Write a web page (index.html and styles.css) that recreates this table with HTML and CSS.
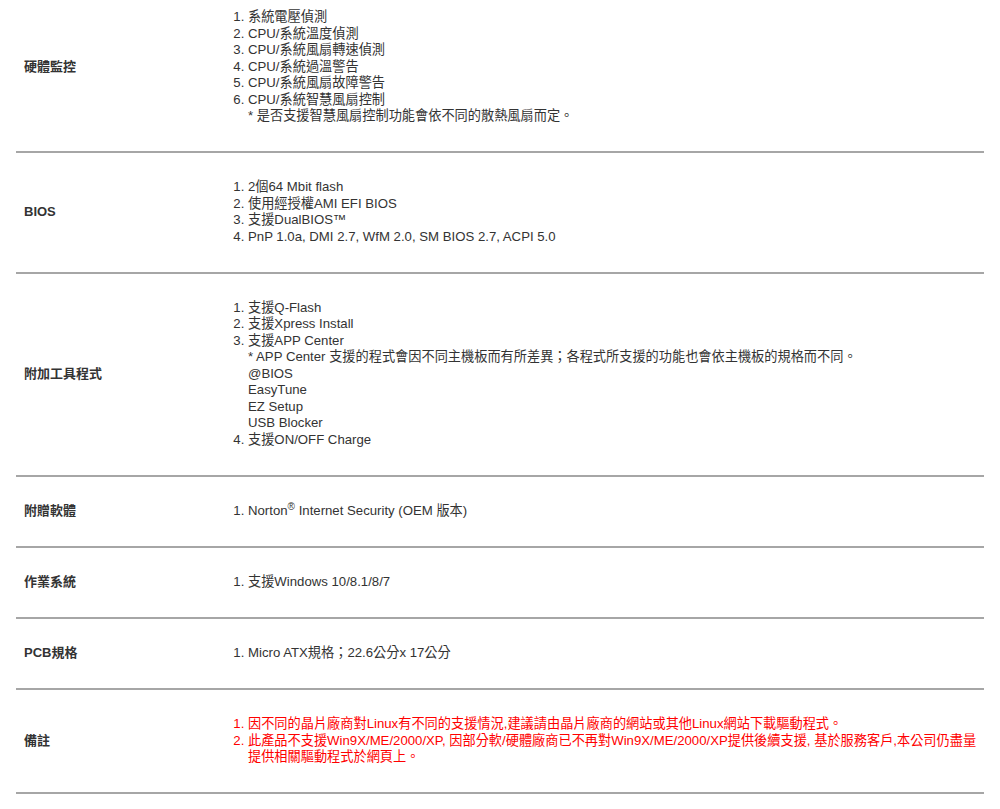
FILE: index.html
```html
<!DOCTYPE html>
<html lang="zh-Hant">
<head>
    <meta charset="UTF-8">
    <title>規格</title>
    <link rel="stylesheet" href="styles.css">
</head>
<body>
    <div class="specs">
        <div class="spec-row">
            <div class="spec-label">硬體監控</div>
            <ol class="spec-list">
                <li>系統電壓偵測</li>
                <li>CPU/系統溫度偵測</li>
                <li>CPU/系統風扇轉速偵測</li>
                <li>CPU/系統過溫警告</li>
                <li>CPU/系統風扇故障警告</li>
                <li>CPU/系統智慧風扇控制
                    <div>* 是否支援智慧風扇控制功能會依不同的散熱風扇而定。</div>
                </li>
            </ol>
        </div>

        <div class="spec-row">
            <div class="spec-label">BIOS</div>
            <ol class="spec-list">
                <li>2個64 Mbit flash</li>
                <li>使用經授權AMI EFI BIOS</li>
                <li>支援DualBIOS™</li>
                <li>PnP 1.0a, DMI 2.7, WfM 2.0, SM BIOS 2.7, ACPI 5.0</li>
            </ol>
        </div>

        <div class="spec-row">
            <div class="spec-label">附加工具程式</div>
            <ol class="spec-list">
                <li>支援Q-Flash</li>
                <li>支援Xpress Install</li>
                <li>支援APP Center
                    <div>* APP Center 支援的程式會因不同主機板而有所差異；各程式所支援的功能也會依主機板的規格而不同。</div>
                    <div>@BIOS</div>
                    <div>EasyTune</div>
                    <div>EZ Setup</div>
                    <div>USB Blocker</div>
                </li>
                <li>支援ON/OFF Charge</li>
            </ol>
        </div>

        <div class="spec-row">
            <div class="spec-label">附贈軟體</div>
            <ol class="spec-list">
                <li>Norton<sup>®</sup> Internet Security (OEM 版本)</li>
            </ol>
        </div>

        <div class="spec-row">
            <div class="spec-label">作業系統</div>
            <ol class="spec-list">
                <li>支援Windows 10/8.1/8/7</li>
            </ol>
        </div>

        <div class="spec-row">
            <div class="spec-label">PCB規格</div>
            <ol class="spec-list">
                <li>Micro ATX規格；22.6公分x 17公分</li>
            </ol>
        </div>

        <div class="spec-row">
            <div class="spec-label">備註</div>
            <ol class="spec-list notice">
                <li>因不同的晶片廠商對Linux有不同的支援情況,建議請由晶片廠商的網站或其他Linux網站下載驅動程式。</li>
                <li>此產品不支援Win9X/ME/2000/XP, 因部分軟/硬體廠商已不再對Win9X/ME/2000/XP提供後續支援, 基於服務客戶,本公司仍盡量提供相關驅動程式於網頁上。</li>
            </ol>
        </div>
    </div>
</body>
</html>
```

FILE: styles.css
```css
body {
    margin: 0;
    padding: 0 16px;
    font-family: "Liberation Sans", Arial, "Noto Sans CJK TC", sans-serif;
    font-size: 13.2px;
    line-height: 16.5px;
    color: #333;
    background-color: #fff;
}
.specs {
    margin-top: -17px;
}
.spec-row {
    display: flex;
    align-items: center;
    padding: 26.3px 0 26.3px 8px;
    border-bottom: 2px solid #a6a6a6;
}
.spec-label {
    flex: 0 0 209px;
    font-size: 13px;
    font-weight: bold;
}
.spec-list {
    flex: 1;
    margin: 0;
    padding-left: 15px;
}
.spec-list sup {
    font-size: 10px;
    line-height: 0;
}
.notice {
    color: #f00;
}
```
